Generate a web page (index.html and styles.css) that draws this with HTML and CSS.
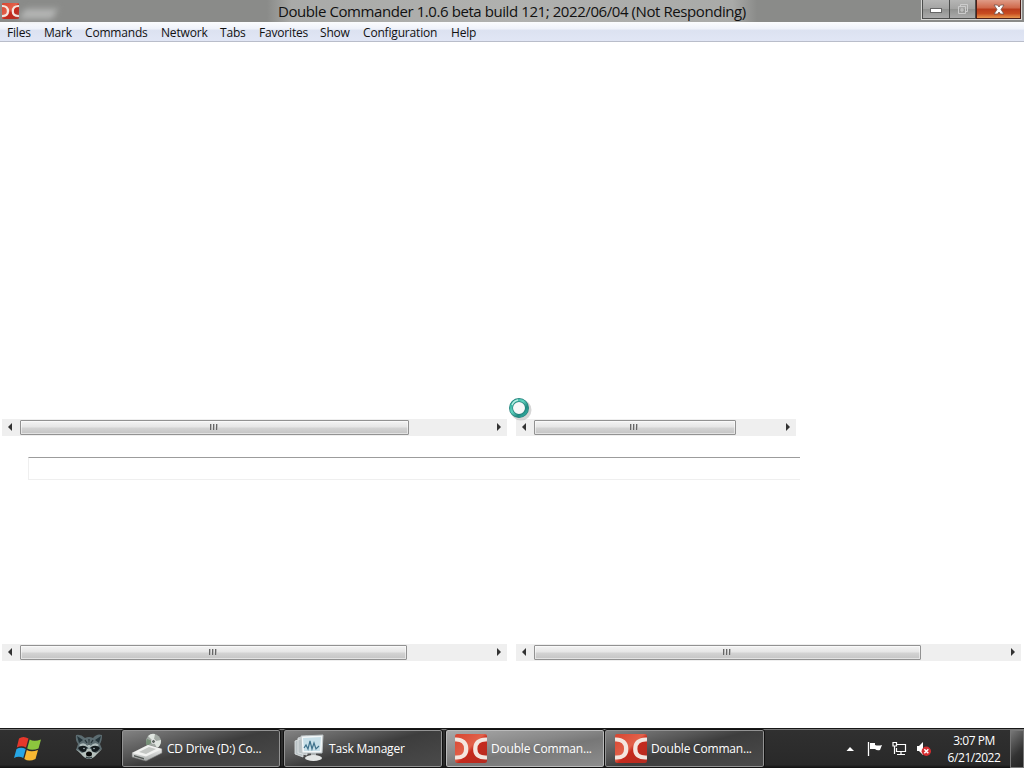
FILE: index.html
```html
<!DOCTYPE html>
<html>
<head>
    <meta charset="utf-8">
    <title>Double Commander</title>
    <link rel="stylesheet" href="styles.css">
</head>
<body>

    <svg class="defs" width="0" height="0">
        <defs>
            <linearGradient id="red" x1="0" y1="0" x2="1" y2="1">
                <stop offset="0" stop-color="#d8442f"/>
                <stop offset="0.45" stop-color="#e2614a"/>
                <stop offset="0.55" stop-color="#c52a1d"/>
                <stop offset="1" stop-color="#b32d22"/>
            </linearGradient>
            <linearGradient id="metal" x1="0" y1="0" x2="0" y2="1">
                <stop offset="0" stop-color="#ffffff"/>
                <stop offset="1" stop-color="#a9adab"/>
            </linearGradient>
            <symbol id="dc" viewBox="0 0 30 29" preserveAspectRatio="none">
                <rect width="30" height="29" rx="2" fill="url(#red)"/>
                <path d="M0 5.500C7 5 10.500 9 10.500 15S7 24 0 23.500M30 5.500C22.500 5 19 9 19 15S22.500 24 30 23.500" fill="none" stroke="#f4e6df" stroke-width="4"/>
            </symbol>
        </defs>
    </svg>

    <div id="titlebar">
        <svg class="app-icon" width="17" height="16"><use href="#dc"/></svg>
        <div class="smudge"></div>
        <div class="title"><span>Double Commander 1.0.6 beta build 121; 2022/06/04 (Not Responding)</span></div>
        <div class="buttons">
            <div class="btn min"><svg width="12" height="6"><rect x="0.500" y="0.500" width="11" height="4" fill="#fff" stroke="#666"/></svg></div>
            <div class="btn max"><svg width="12" height="12"><path d="M3.500 3V1.500H10.500V8.500H9M1.500 3.500H8.500V10.500H1.500ZM4 6H6V8H4Z" fill="none" stroke="#ccc"/></svg></div>
            <div class="btn close"><svg width="12" height="11" viewBox="0 0 12 11"><path d="M1 1H4.500L6 3L7.500 1H11L8 5.500L11 10H7.500L6 8L4.500 10H1L4 5.500Z" fill="#fff" stroke="#71504a" stroke-width="0.8"/></svg></div>
        </div>
    </div>

    <div id="menubar">
        <span class="m-files">Files</span>
        <span class="m-mark">Mark</span>
        <span class="m-commands">Commands</span>
        <span class="m-network">Network</span>
        <span class="m-tabs">Tabs</span>
        <span class="m-favorites">Favorites</span>
        <span class="m-show">Show</span>
        <span class="m-config">Configuration</span>
        <span class="m-help">Help</span>
    </div>

    <div id="client">
        <div class="panels top">
            <div class="scrollbar left">
                <i class="arrow prev"></i>
                <div class="thumb t1"><i></i><i></i><i></i></div>
                <i class="arrow next"></i>
            </div>
            <div class="scrollbar short">
                <i class="arrow prev"></i>
                <div class="thumb t2"><i></i><i></i><i></i></div>
                <i class="arrow next"></i>
            </div>
        </div>
        <div class="command-line"></div>
        <div class="panels bottom">
            <div class="scrollbar left">
                <i class="arrow prev"></i>
                <div class="thumb t3"><i></i><i></i><i></i></div>
                <i class="arrow next"></i>
            </div>
            <div class="scrollbar right">
                <i class="arrow prev"></i>
                <div class="thumb t3"><i></i><i></i><i></i></div>
                <i class="arrow next"></i>
            </div>
        </div>
        <svg class="busy" width="24" height="24">
            <defs>
                <linearGradient id="ring" x1="0" y1="0" x2="1" y2="1">
                    <stop offset="0" stop-color="#1c9d8d"/>
                    <stop offset="0.4" stop-color="#62d5c1"/>
                    <stop offset="0.700" stop-color="#218a80"/>
                    <stop offset="1" stop-color="#35b6aa"/>
                </linearGradient>
            </defs>
            <circle cx="13" cy="13" r="8.500" fill="none" stroke="#bbb" stroke-width="4" opacity="0.600"/>
            <circle cx="11" cy="11" r="7.500" fill="#f6f8f8"/>
            <circle cx="11" cy="11" r="8" fill="none" stroke="#257f7b" stroke-width="4"/>
            <circle cx="11" cy="11" r="8" fill="none" stroke="url(#ring)" stroke-width="2.600"/>
            <path d="M4 8A8 8 0 0 1 10 3" fill="none" stroke="#b7eee2" stroke-width="1.500"/>
        </svg>
    </div>

    <div id="taskbar">
        <div class="start">
            <svg width="28" height="26" viewBox="0 0 28 26">
                <path d="M5 2.500Q9-.5 14.500 2.500L12 11.500Q7.500 9 2.800 11.500Z" fill="#e5372b"/>
                <path d="M15.700 3.500Q20 6 27 3.500L24.500 12.500Q18 15 13.200 12.500Z" fill="#8cc63e"/>
                <path d="M2.500 13Q7 10.500 11.700 13L9.200 22Q5 19.500 0 22Z" fill="#27a6e5"/>
                <path d="M12.800 14Q17 16.500 24 14L21.500 23Q15 26 10.300 23Z" fill="#f8b832"/>
            </svg>
        </div>
        <div class="pinned">
            <svg width="28" height="27" viewBox="0 0 28 27">
                <path d="M1 2Q6 1 10 5Q14 3 18 5Q22 0 27 2Q27 8 25 11L27 16L22 19Q19 26 14 26Q9 26 6 20L1 17L3 11Q0 7 1 2Z" fill="#5c6c71"/>
                <path d="M2 3L8 7L4 10ZM26 3L20 7L24 10Z" fill="#24343a"/>
                <path d="M4 12Q9 8 12.500 13L14 7L15.500 13Q20 8 24 12L22 14L15 14L14 18L13 14L6 14Z" fill="#aebcbc"/>
                <path d="M3 15Q7 11 12 14L11 18Q7 21 3 15ZM25 15Q21 11 16 14L17 18Q21 21 25 15Z" fill="#141b1e"/>
                <path d="M1 16L7 20L11 18.500L12 16H16L17 18.500L21 20L27 16L22 21Q18 26 14 26Q9 25 6 21Z" fill="#b6c1bd"/>
                <ellipse cx="14" cy="21" rx="3" ry="2.500" fill="#080a0a"/>
                <circle cx="9" cy="15.500" r="0.800" fill="#aebbc0"/><circle cx="19" cy="15.500" r="0.800" fill="#aebbc0"/>
                <path d="M11 24Q14 26 17 24M14 6V12M10 7L12 10M18 7L16 10" fill="none" stroke="#263439" stroke-width="1.300"/>
            </svg>
        </div>
        <div class="task cd">
            <svg width="32" height="30" viewBox="0 0 32 30">
                <circle cx="22.500" cy="8.500" r="7.500" fill="#a3aaa4"/>
                <path d="M22.500 8.500L17 3Q20 0 24 1ZM22.500 8.500L30 7Q30 13 26 15Z" fill="#e0e6e0"/>
                <path d="M22.500 8.500L16 13Q14 10 16 6Z" fill="#758f76"/>
                <circle cx="22.500" cy="8.500" r="2" fill="#606864" stroke="#eee"/>
                <path d="M1 20L17 12L31 16V20L15 28L1 24Z" fill="url(#metal)" stroke="#777" stroke-width="0.600"/>
                <path d="M1 20L17 12L31 16L15 23.500Z" fill="#f1f2f0"/>
                <path d="M8 19L18 14L25 16L15 21Z" fill="#c3c6c3"/>
                <path d="M3 22L13 25V26.500L3 23.500Z" fill="#555a58"/>
            </svg>
            <span>CD Drive (D:) Co...</span>
        </div>
        <div class="task tm">
            <svg width="32" height="30" viewBox="0 0 32 30">
                <path d="M2 8L10 5V24L2 21ZM5 5L14 3V22L5 20Z" fill="#b9c2c5" stroke="#e3e7e8" stroke-width="0.800"/>
                <path d="M8 3L30 2L29 20L9 20Z" fill="#f2f6f7" stroke="#bbc2c4"/>
                <path d="M10 5L28 4L27 18L11 18Z" fill="#c7dfe8"/>
                <path d="M11 15L13 12L15 16L17 8L19 16L21 10L23 16L26 13" fill="none" stroke="#3e718b" stroke-width="1.200"/>
                <path d="M18 20L23 20L23 24L18 24Z" fill="#aeb4b5"/>
                <ellipse cx="20.500" cy="25" rx="8.500" ry="3" fill="#e3e6e5"/>
            </svg>
            <span>Task Manager</span>
        </div>
        <div class="task dc active">
            <svg width="32" height="29"><use href="#dc"/></svg>
            <span>Double Comman...</span>
        </div>
        <div class="task dc second">
            <svg width="32" height="29"><use href="#dc"/></svg>
            <span>Double Comman...</span>
        </div>
        <div class="tray">
            <svg class="up" width="9" height="6"><path d="M0.500 5L4 1L8 5Z" fill="#fff"/></svg>
            <svg class="flag" width="16" height="15"><path d="M1.500 1V15" stroke="#fff" stroke-width="1.300"/><path d="M3 2H8V4Q11 5 15 4L13 9Q10 10 8 8H3Z" fill="#fff"/></svg>
            <svg class="net" width="15" height="15"><path d="M5 3.500H13.500V10.500H4.500V7M9 11V13.500M5 13.500H13M1 1.500H4.500V5H1ZM2.500 5V13" fill="none" stroke="#fff" stroke-width="1.200"/></svg>
            <svg class="sound" width="16" height="16"><path d="M1 5H3L7 1V14L3 10H1Z" fill="#fff"/><circle cx="10.300" cy="10.300" r="4.700" fill="#d52d30"/><path d="M8.300 8.300L12.300 12.300M12.300 8.300L8.300 12.300" stroke="#fff" stroke-width="1.500"/></svg>
            <div class="clock"><div class="time">3:07 PM</div><div class="date">6/21/2022</div></div>
            <div class="peek"></div>
        </div>
    </div>

</body>
</html>
```

FILE: styles.css
```css
* {
    box-sizing: border-box;
    margin: 0;
    padding: 0;
}

body {
    display: flex;
    flex-direction: column;
    width: 1024px;
    height: 768px;
    overflow: hidden;
    background: #fff;
    color: #111;
    font: 12px "Open Sans", "Noto Sans", sans-serif;
    white-space: nowrap;
}

svg {
    display: block;
    flex: none;
}

#titlebar {
    display: flex;
    flex: none;
    height: 22px;
    background: #8a8b89;
}

.app-icon {
    margin: 3px 0 0 2px;
}

.smudge {
    width: 33px;
    height: 10px;
    margin: 9px 0 0 3px;
    background: #b4b5b4;
    filter: blur(3px);
    transform: skewX(-20deg);
}

.title {
    width: 490px;
    margin-left: 212px;
    height: 22px;
    background: linear-gradient(90deg, #8a8b89, #a9aaa8 5%, #b0b1af 50%, #a9aaa8 95%, #8a8b89);
    padding-left: 11px;
    font-size: 15px;
    letter-spacing: -0.42px;
    line-height: 23px;
}

.buttons {
    display: flex;
    width: 101px;
    height: 20px;
    margin-left: auto;
    margin-right: 2px;
    border: 1px solid #d5d5d3;
    border-top: none;
}

.btn {
    display: flex;
    align-items: center;
    justify-content: center;
    border: 1px solid #4c4d4c;
    border-top: none;
    background: linear-gradient(#b6b6b5, #a3a3a2 50%, #919290 51%, #aaa);
}

.min {
    width: 28px;
    padding-top: 4px;
}

.max {
    width: 26px;
    border-left: none;
}

.close {
    flex: 1;
    border-color: #4d1e17;
    background: linear-gradient(#df9b86, #cf6749 45%, #b93b1c 50%, #c84c20 75%, #e7964d);
}

#menubar {
    display: flex;
    flex: none;
    gap: 14px;
    height: 20px;
    padding-left: 7px;
    line-height: 22px;
    letter-spacing: -0.18px;
    background: linear-gradient(#fbfcfe, #eff2fa 35%, #dce2f1 45%, #e1e6f5);
    border-bottom: 1px solid #b9bdca;
}

.m-files { width: 23px; }
.m-mark { width: 27px; }
.m-commands { width: 62px; }
.m-network { width: 45px; }
.m-tabs { width: 25px; }
.m-favorites { width: 47px; }
.m-show { width: 29px; }
.m-config { width: 74px; }
.m-help { width: 25px; }

#client {
    position: relative;
    flex: 1;
}

.panels {
    display: flex;
    align-items: flex-end;
    gap: 9px;
    padding-left: 2px;
}

.panels.top {
    height: 394px;
}

.panels.bottom {
    height: 181px;
}

.scrollbar {
    display: flex;
    align-items: center;
    width: 505px;
    height: 17px;
    background: #efefef;
}

.scrollbar.short {
    width: 280px;
}

.arrow {
    margin-bottom: 1px;
    border: 4px solid transparent;
}

.prev {
    margin-left: 2px;
    margin-right: 8px;
    border-right-color: #333;
}

.next {
    margin-left: auto;
    margin-right: 2px;
    border-left-color: #333;
}

.thumb {
    display: flex;
    align-items: center;
    justify-content: center;
    gap: 1px;
    height: 15px;
    padding: 0 2px 1px 0;
    border: 1px solid #929292;
    border-radius: 1px;
    background: linear-gradient(#f4f4f4, #e6e6e6 45%, #d3d3d3 55%, #c4c4c4);
    box-shadow: inset 0 0 0 1px rgba(255,255,255,0.5);
}

.thumb i {
    width: 2px;
    height: 6px;
    border-left: 1px solid #666;
    border-right: 1px solid #bbb;
}

.t1 { width: 389px; }
.t2 { width: 202px; }
.t3 { width: 387px; }

.command-line {
    width: 772px;
    height: 23px;
    margin: 21px 0 0 28px;
    border: 1px solid #efefef;
    border-top-color: #9c9c9c;
    border-right: none;
}

/* busy cursor floats above the panels */
.busy {
    position: absolute;
    left: 508px;
    top: 355px;
}

#taskbar {
    display: flex;
    flex: none;
    height: 40px;
    border-top: 1px solid #171717;
    background: linear-gradient(#777 1px, #303030 1px, #292929 92%, #101010);
    color: #fff;
}

.start {
    width: 56px;
    padding: 7px 0 0 14px;
}

.pinned {
    width: 65px;
    padding: 4px 0 0 19px;
}

.task {
    display: flex;
    align-items: center;
    width: 160px;
    height: 39px;
    padding: 0 0 1px 9px;
    gap: 4px;
    letter-spacing: -0.2px;
    border: 1px solid #111;
    border-radius: 3px;
    background: linear-gradient(165deg, #858585, #555 35%, #3d3d3d 50%, #4b4b4b);
    box-shadow: inset 0 0 0 1px #939393;
}

.task.tm {
    margin-left: 2px;
}

.task.active {
    margin-left: 2px;
    background: linear-gradient(170deg, #aaa, #888 40%, #777 55%, #8e8e8e);
    box-shadow: inset 0 0 0 1px #bbb;
}

.task.second {
    width: 161px;
    margin-left: -1px;
    padding-left: 10px;
}

.tray {
    display: flex;
    align-items: center;
    flex: 1;
}

.up { margin-left: 81px; }
.flag { margin-left: 12px; }
.net { margin-left: 9px; }
.sound { margin-left: 9px; }

.clock {
    width: 62px;
    margin-left: 11px;
    text-align: center;
    line-height: 17px;
    letter-spacing: -0.45px;
}

.peek {
    width: 14px;
    height: 38px;
    margin-left: auto;
    border: 1px solid #777;
    background: linear-gradient(135deg, #777, #333 60%, #222);
}
```
